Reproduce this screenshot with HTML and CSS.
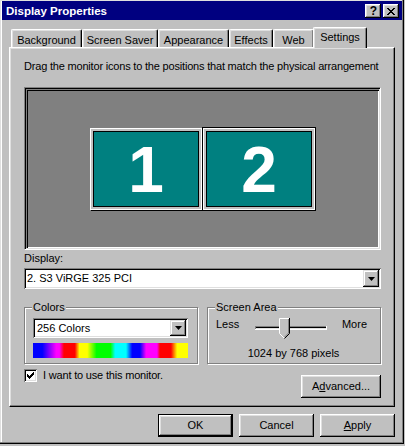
FILE: index.html
```html
<!DOCTYPE html>
<html>
<head>
<meta charset="utf-8">
<link rel="stylesheet" href="styles.css">
</head>
<body>
<div class="window">
  <div class="titlebar">
    <span class="title">Display Properties</span>
    <div class="tbtns">
      <span class="tbtn help">?</span>
      <span class="tbtn"><svg width="8" height="7" viewBox="0 0 8 7"><path d="M0 0h2v1h-2zM6 0h2v1h-2zM1 1h2v1h-2zM5 1h2v1h-2zM2 2h4v1h-4zM3 3h2v1h-2zM2 4h4v1h-4zM1 5h2v1h-2zM5 5h2v1h-2zM0 6h2v1h-2zM6 6h2v1h-2z" fill="#000"/></svg></span>
    </div>
  </div>
  <div class="body">
    <div class="tabs">
      <div class="tab t-bg">Background</div>
      <div class="tab t-ss">Screen Saver</div>
      <div class="tab t-ap">Appearance</div>
      <div class="tab t-ef">Effects</div>
      <div class="tab t-web">Web</div>
      <div class="tab tab-sel">Settings</div>
    </div>
    <div class="panel">
      <p class="hint">Drag the monitor icons to the positions that match the physical arrangement</p>
      <div class="preview">
        <div class="mon">1</div>
        <div class="mon sel">2</div>
      </div>
      <div class="lbl">Display:</div>
      <div class="combo wide">
        <span class="val">2. S3 ViRGE 325 PCI</span>
        <span class="drop"><svg width="7" height="4" viewBox="0 0 7 4"><path d="M0 0h7l-3.5 4z" fill="#000"/></svg></span>
      </div>
      <div class="groups">
        <div class="group colors">
          <span class="legend">Colors</span>
          <div class="combo small">
            <span class="val">256 Colors</span>
            <span class="drop"><svg width="7" height="4" viewBox="0 0 7 4"><path d="M0 0h7l-3.5 4z" fill="#000"/></svg></span>
          </div>
          <div class="spectrum"></div>
        </div>
        <div class="group area">
          <span class="legend">Screen Area</span>
          <div class="sliderrow">
            <span>Less</span>
            <svg class="slider" width="72" height="21" viewBox="0 0 72 21">
              <rect x="0" y="8" width="72" height="1" fill="#808080"/>
              <rect x="0" y="8" width="1" height="4" fill="#808080"/>
              <rect x="1" y="9" width="70" height="1" fill="#000"/>
              <rect x="1" y="10" width="70" height="1" fill="#dfdfdf"/>
              <rect x="0" y="11" width="72" height="1" fill="#fff"/>
              <rect x="71" y="8" width="1" height="4" fill="#fff"/>
              <polygon points="24,0 35,0 35,15 29.5,20.5 24,15" fill="#c0c0c0"/>
              <path d="M24.5 15.5V0.5H34" stroke="#fff" stroke-width="1" fill="none"/>
              <path d="M24.5 15.5L29 20" stroke="#fff" stroke-width="1" fill="none"/>
              <path d="M34.5 0V15.5L29.5 20.5" stroke="#000" stroke-width="1" fill="none"/>
              <path d="M33.5 1V15L29.5 19" stroke="#808080" stroke-width="1" fill="none"/>
            </svg>
            <span>More</span>
          </div>
          <div class="res">1024 by 768 pixels</div>
        </div>
      </div>
      <div class="lastrow">
        <div class="check">
          <span class="box"><svg width="13" height="13" viewBox="0 0 13 13"><path d="M3 5h1v3h-1zM4 6h1v3h-1zM5 7h1v3h-1zM6 6h1v3h-1zM7 5h1v3h-1zM8 4h1v3h-1zM9 3h1v3h-1z" fill="#000"/></svg></span>
          <span class="checklbl">I want to use this monitor.</span>
        </div>
        <div class="btn adv">A<u>d</u>vanced...</div>
      </div>
    </div>
    <div class="buttons">
      <div class="btn default">OK</div>
      <div class="btn">Cancel</div>
      <div class="btn"><u>A</u>pply</div>
    </div>
  </div>
</div>
</body>
</html>
```

FILE: styles.css
```css
* { box-sizing: border-box; margin: 0; padding: 0; }
html, body { background: #c0c0c0; }
body {
  width: 405px; height: 446px; overflow: hidden;
  font-family: "Liberation Sans", Arial, sans-serif;
  font-size: 11px; line-height: 13px; color: #000;
}
.window {
  width: 404px; height: 444px;
  background: #c0c0c0;
  padding: 1px 2px 0 2px;
  box-shadow: inset -1px -1px #000, inset -2px -2px #808080, inset 1px 1px #dfdfdf, inset 2px 2px #fff;
  display: flex; flex-direction: column;
}
.titlebar {
  height: 19px; background: #000080; color: #fff;
  display: flex; align-items: center; justify-content: space-between;
  padding: 0 3px 0 4px; font-weight: bold;
}
.title { padding-top: 1px; font-size: 11.5px; }
.tbtns { display: flex; gap: 2px; margin-top: 1px; }
.tbtn {
  width: 16px; height: 14px; background: #c0c0c0; color: #000;
  box-shadow: inset -1px -1px #000, inset 1px 1px #fff, inset -2px -2px #808080, inset 2px 2px #dfdfdf;
  display: flex; align-items: center; justify-content: center;
  font-weight: bold; font-size: 12px; line-height: 12px;
}
.help { padding-left: 1px; }
.body { flex: 1; padding: 7px 7px 0 7px; }
.tabs { display: flex; align-items: flex-end; height: 20px; padding-left: 2px; }
.tab {
  height: 18px; padding-top: 4px; text-align: center; white-space: nowrap;
  border-top: 1px solid #fff; border-left: 1px solid #fff; border-right: 1px solid #000;
  border-top-left-radius: 2px; border-top-right-radius: 2px;
  box-shadow: inset -1px 0 #808080, inset 1px 1px #dfdfdf;
}
.t-bg { width: 71px; }
.t-ss { width: 76px; }
.t-ap { width: 71px; }
.t-ef { width: 44px; }
.t-web { width: 41px; }
.tab-sel {
  width: 54px; height: 21px; margin: 0 0 -1px -1px; padding-top: 3px;
  background: #c0c0c0; position: relative; z-index: 1;
}
.panel {
  height: 360px;
  border-top: 1px solid #fff; border-left: 1px solid #fff;
  border-right: 1px solid #000; border-bottom: 1px solid #000;
  box-shadow: inset -1px -1px #808080, inset 1px 1px #dfdfdf;
  padding: 12px 13px 0 14px;
}
.hint { white-space: nowrap; letter-spacing: -0.19px; }
.preview {
  margin-top: 14px; height: 163px; background: #808080;
  border: 1px solid; border-color: #808080 #fff #fff #808080;
  box-shadow: inset 1px 1px #000, inset -1px -1px #dfdfdf, inset 2px 2px #808080, inset 3px 3px #000, inset -2px -2px #fff;
  display: flex; align-items: center; justify-content: center; gap: 1px;
}
.mon {
  width: 112px; height: 82px; background: #008080; color: #fff;
  font: bold 64px/1 "Liberation Sans", Arial, sans-serif;
  display: flex; align-items: center; justify-content: center;
  border: 1px solid #fff;
  box-shadow: inset 0 0 0 2px #c0c0c0, inset 0 0 0 3px #000, 1px 1px #000;
  padding-top: 2px;
}
.mon.sel { box-shadow: inset 0 0 0 2px #c0c0c0, inset 0 0 0 3px #000, 0 0 0 1px #000; }
.lbl { margin-top: 2px; }
.combo {
  display: flex; align-items: center; background: #fff;
  box-shadow: inset 1px 1px #808080, inset -1px -1px #fff, inset 2px 2px #000, inset -2px -2px #dfdfdf;
  padding: 2px;
}
.combo .val { flex: 1; white-space: nowrap; }
.wide { margin-top: 3px; height: 21px; }
.wide .val { padding-left: 1px; }
.small { width: 155px; height: 20px; }
.small .val { padding-left: 2px; }
.drop {
  width: 16px; align-self: stretch; background: #c0c0c0;
  box-shadow: inset -1px -1px #000, inset 1px 1px #dfdfdf, inset -2px -2px #808080, inset 2px 2px #fff;
  display: flex; align-items: center; justify-content: center;
}
.drop svg { display: block; margin-left: 1px; }
.groups { margin-top: 18px; display: flex; gap: 9px; }
.group {
  position: relative; width: 174px; height: 57px;
  border: 1px solid #808080;
  box-shadow: inset 1px 1px #fff, 1px 1px #fff;
  padding: 10px 9px 0 8px;
}
.legend {
  position: absolute; top: -7px; left: 7px; padding: 0 1px; background: #c0c0c0; white-space: nowrap;
}
.spectrum {
  margin-top: 5px; width: 155px; height: 15px;
  background: linear-gradient(90deg, #00f 0%, #00f 6%, #f0f 15%, #f0f 17%, #f00 20%, #f00 27%, #ff0 30%, #ff0 35%, #0f0 41%, #0f0 50%, #0ff 53%, #0ff 60%, #00f 64%, #00f 69%, #f0f 73%, #f0f 80%, #f00 82%, #f00 89%, #ff0 93%, #ff0 100%);
}
.area { padding: 10px 13px 0 8px; }
.sliderrow { display: flex; justify-content: space-between; align-items: flex-start; }
.slider { display: block; }
.res { margin-top: 8px; text-align: center; padding-left: 4px; }
.lastrow { margin-top: 5px; display: flex; justify-content: space-between; align-items: flex-start; }
.check { display: flex; align-items: center; gap: 6px; }
.checklbl { letter-spacing: -0.18px; }
.box {
  width: 13px; height: 13px; background: #fff;
  box-shadow: inset 1px 1px #808080, inset -1px -1px #fff, inset 2px 2px #000, inset -2px -2px #dfdfdf;
}
.box svg { display: block; }
.btn {
  width: 75px; height: 23px; background: #c0c0c0;
  box-shadow: inset -1px -1px #000, inset 1px 1px #fff, inset -2px -2px #808080, inset 2px 2px #dfdfdf;
  display: flex; align-items: center; justify-content: center; white-space: nowrap;
}
.btn.default {
  box-shadow: inset 0 0 0 1px #000, inset -2px -2px #000, inset 2px 2px #fff, inset -3px -3px #808080, inset 3px 3px #dfdfdf;
}
.adv { width: 80px; margin-top: 6px; }
.buttons { margin-top: 7px; display: flex; justify-content: flex-end; gap: 6px; }
```
